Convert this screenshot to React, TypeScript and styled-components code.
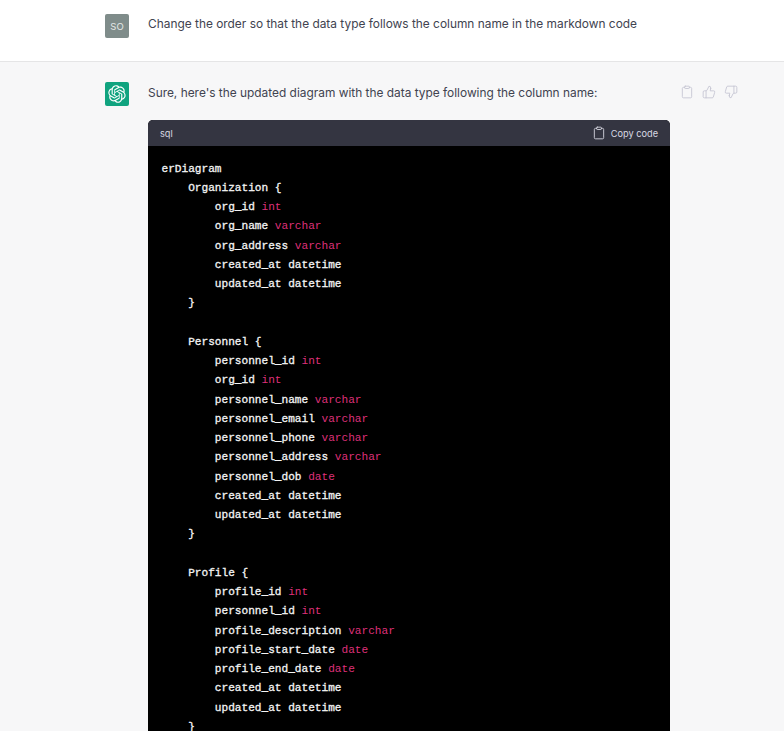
import React from 'react';
import styled, { createGlobalStyle } from 'styled-components';
import { Clipboard, ThumbsDown, ThumbsUp } from 'lucide-react';

const GlobalStyle = createGlobalStyle`
  html, body {
    margin: 0;
    height: 731px;
    overflow: hidden;
    background: #fff;
  }
  #root {
    height: 731px;
    overflow: hidden;
  }
`;

const OPENAI_PATH =
  'M37.5324 16.8707C37.9808 15.5241 38.1363 14.0974 37.9886 12.6859C37.8409 11.2744 37.3934 9.91076 36.676 8.68622C35.6126 6.83404 33.9882 5.3676 32.0373 4.4985C30.0864 3.62941 27.9098 3.40259 25.8215 3.85078C24.8796 2.7893 23.7219 1.94125 22.4257 1.36341C21.1295 0.785575 19.7249 0.491269 18.3058 0.500197C16.1708 0.495044 14.0893 1.16803 12.3614 2.42214C10.6335 3.67624 9.34853 5.44666 8.6917 7.47815C7.30085 7.76286 5.98686 8.3414 4.8377 9.17505C3.68854 10.0087 2.73073 11.0782 2.02839 12.312C0.956464 14.1591 0.498905 16.2988 0.721698 18.4228C0.944492 20.5467 1.83612 22.5449 3.268 24.1293C2.81966 25.4759 2.66413 26.9026 2.81182 28.3141C2.95951 29.7256 3.40701 31.0892 4.12437 32.3138C5.18791 34.1659 6.8123 35.6322 8.76321 36.5013C10.7141 37.3704 12.8907 37.5973 14.9789 37.1492C15.9208 38.2107 17.0786 39.0587 18.3747 39.6366C19.6709 40.2144 21.0755 40.5087 22.4946 40.4998C24.6307 40.5054 26.7133 39.8321 28.4418 38.5772C30.1704 37.3223 31.4556 35.5506 32.1119 33.5179C33.5027 33.2332 34.8167 32.6547 35.9659 31.821C37.115 30.9874 38.0728 29.9178 38.7752 28.684C39.8458 26.8371 40.3023 24.6979 40.0789 22.5748C39.8556 20.4517 38.9639 18.4544 37.5324 16.8707ZM22.4978 37.8849C20.7443 37.8874 19.0459 37.2733 17.6994 36.1501C17.7601 36.117 17.8666 36.0586 17.936 36.0161L25.9004 31.4156C26.1003 31.3019 26.2663 31.137 26.3813 30.9378C26.4964 30.7386 26.5563 30.5124 26.5549 30.2825V19.0542L29.9213 20.998C29.9389 21.0068 29.9541 21.0198 29.9656 21.0359C29.977 21.052 29.9842 21.0707 29.9867 21.0902V30.3889C29.9842 32.375 29.1946 34.2791 27.7909 35.6841C26.3872 37.0892 24.4838 37.8806 22.4978 37.8849ZM6.39227 31.0064C5.51397 29.4888 5.19742 27.7107 5.49804 25.9832C5.55718 26.0187 5.66048 26.0818 5.73461 26.1244L13.699 30.7248C13.8975 30.8408 14.1233 30.902 14.3532 30.902C14.583 30.902 14.8088 30.8408 15.0073 30.7248L24.731 25.1103V28.9979C24.7321 29.0177 24.7283 29.0376 24.7199 29.0556C24.7115 29.0736 24.6988 29.0893 24.6829 29.1012L16.6317 33.7497C14.9096 34.7416 12.8643 35.0097 10.9447 34.4954C9.02506 33.9811 7.38785 32.7263 6.39227 31.0064ZM4.29707 13.6194C5.17156 12.0998 6.55279 10.9364 8.19885 10.3327C8.19885 10.4013 8.19491 10.5228 8.19491 10.6071V19.808C8.19351 20.0378 8.25334 20.2638 8.36823 20.4629C8.48312 20.6619 8.64893 20.8267 8.84863 20.9404L18.5723 26.5542L15.206 28.4979C15.1894 28.5089 15.1703 28.5155 15.1505 28.5173C15.1307 28.5191 15.1107 28.516 15.0924 28.5082L7.04046 23.8557C5.32135 22.8601 4.06716 21.2235 3.55289 19.3046C3.03862 17.3858 3.30624 15.3413 4.29707 13.6194ZM31.955 20.0556L22.2312 14.4411L25.5976 12.4981C25.6142 12.4872 25.6333 12.4805 25.6531 12.4787C25.6729 12.4769 25.6928 12.4801 25.7111 12.4879L33.7631 17.1364C34.9967 17.849 36.0017 18.8982 36.6606 20.1613C37.3194 21.4244 37.6047 22.849 37.4832 24.2684C37.3617 25.6878 36.8382 27.0432 35.9743 28.1759C35.1103 29.3086 33.9415 30.1717 32.6047 30.6641C32.6047 30.5947 32.6047 30.4733 32.6047 30.3889V21.188C32.6066 20.9586 32.5474 20.7328 32.4332 20.5338C32.319 20.3348 32.1541 20.1698 31.955 20.0556ZM35.3055 15.0128C35.2464 14.9765 35.1431 14.9142 35.069 14.8717L27.1045 10.2712C26.906 10.1554 26.6803 10.0943 26.4504 10.0943C26.2206 10.0943 25.9948 10.1554 25.7963 10.2712L16.0726 15.8858V11.9982C16.0715 11.9783 16.0753 11.9585 16.0837 11.9405C16.0921 11.9225 16.1048 11.9068 16.1207 11.8949L24.1719 7.25025C25.4053 6.53903 26.8158 6.19376 28.2383 6.25482C29.6608 6.31589 31.0364 6.78077 32.2044 7.59508C33.3723 8.40939 34.2842 9.53945 34.8334 10.8531C35.3826 12.1667 35.5464 13.6095 35.3055 15.0128ZM14.2424 21.9419L10.8752 19.9981C10.8576 19.9893 10.8423 19.9763 10.8309 19.9602C10.8195 19.9441 10.8122 19.9254 10.8098 19.9058V10.6071C10.8107 9.18295 11.2173 7.78848 11.9819 6.58696C12.7466 5.38544 13.8377 4.42659 15.1275 3.82264C16.4173 3.21869 17.8524 2.99464 19.2649 3.1767C20.6775 3.35876 22.0089 3.93941 23.1034 4.85067C23.0427 4.88379 22.937 4.94215 22.8668 4.98473L14.9024 9.58517C14.7025 9.69878 14.5366 9.86356 14.4215 10.0626C14.3065 10.2616 14.2466 10.4877 14.2479 10.7175L14.2424 21.9419ZM16.071 17.9991L20.4018 15.4978L24.7325 17.9975V22.9985L20.4018 25.4983L16.071 22.9985V17.9991Z';

type CodeLine = { indent: number; text: string; type?: string };

const tables: Array<{ name: string; cols: Array<[string, string]> }> = [
  {
    name: 'Organization',
    cols: [
      ['org_id', 'int'],
      ['org_name', 'varchar'],
      ['org_address', 'varchar'],
      ['created_at', 'datetime'],
      ['updated_at', 'datetime'],
    ],
  },
  {
    name: 'Personnel',
    cols: [
      ['personnel_id', 'int'],
      ['org_id', 'int'],
      ['personnel_name', 'varchar'],
      ['personnel_email', 'varchar'],
      ['personnel_phone', 'varchar'],
      ['personnel_address', 'varchar'],
      ['personnel_dob', 'date'],
      ['created_at', 'datetime'],
      ['updated_at', 'datetime'],
    ],
  },
  {
    name: 'Profile',
    cols: [
      ['profile_id', 'int'],
      ['personnel_id', 'int'],
      ['profile_description', 'varchar'],
      ['profile_start_date', 'date'],
      ['profile_end_date', 'date'],
      ['created_at', 'datetime'],
      ['updated_at', 'datetime'],
    ],
  },
];

const codeLines: CodeLine[] = [{ indent: 0, text: 'erDiagram' }];
tables.forEach((table, i) => {
  if (i > 0) codeLines.push({ indent: 0, text: '' });
  codeLines.push({ indent: 4, text: `${table.name} {` });
  table.cols.forEach(([col, type]) => codeLines.push({ indent: 8, text: col, type }));
  codeLines.push({ indent: 4, text: '}' });
});

const App = () => {
  return (
    <Page>
      <GlobalStyle />
      <UserRow>
        <UserAvatar>SO</UserAvatar>
        <Message>Change the order so that the data type follows the column name in the markdown code</Message>
      </UserRow>
      <AssistantRow>
        <BotAvatar>
          <svg width="18" height="18" viewBox="0 0 41 41" fill="none">
            <path d={OPENAI_PATH} fill="#fff" />
          </svg>
        </BotAvatar>
        <Content>
          <Message>Sure, here's the updated diagram with the data type following the column name:</Message>
          <CodeBlock>
            <CodeHeader>
              <span>sql</span>
              <CopyButton>
                <Clipboard size={14} strokeWidth={1.5} />
                Copy code
              </CopyButton>
            </CodeHeader>
            <CodeBody>
              {codeLines.map((line, i) => (
                <Line key={i}>
                  {' '.repeat(line.indent)}
                  {line.text}
                  {line.type && (
                    <>
                      {' '}
                      {line.type === 'datetime' ? line.type : <TypeName>{line.type}</TypeName>}
                    </>
                  )}
                </Line>
              ))}
            </CodeBody>
          </CodeBlock>
        </Content>
        <Actions>
          <Clipboard size={14} strokeWidth={1.5} />
          <ThumbsUp size={14} strokeWidth={1.5} />
          <ThumbsDown size={14} strokeWidth={1.5} />
        </Actions>
      </AssistantRow>
    </Page>
  );
};

const Page = styled.div`
  font-family: Inter, 'Noto Sans', sans-serif;
  color: #374151;
  height: 731px;
  overflow: hidden;
`;

const UserRow = styled.div`
  display: flex;
  gap: 19px;
  height: 62px;
  padding: 14px 0 0 105px;
  box-sizing: border-box;
  background: #fff;
  border-bottom: 1px solid #e5e5e6;
`;

const AssistantRow = styled.div`
  display: flex;
  gap: 19px;
  padding: 20px 0 0 105px;
  background: #f7f7f8;
  min-height: 669px;
  box-sizing: border-box;
`;

const UserAvatar = styled.div`
  width: 24px;
  height: 24px;
  flex: none;
  display: flex;
  align-items: center;
  justify-content: center;
  border-radius: 2px;
  background: #7f8c8a;
  color: #e4e8e7;
  font-size: 9.5px;
`;

const BotAvatar = styled.div`
  width: 24px;
  height: 24px;
  flex: none;
  display: flex;
  align-items: center;
  justify-content: center;
  border-radius: 2px;
  background: #10a37f;
`;

const Content = styled.div`
  width: 522px;
  flex: none;
  display: flex;
  flex-direction: column;
  padding-top: 1px;
`;

const Message = styled.div`
  font-size: 11.9px;
  line-height: 20px;
  color: #414350;
  white-space: nowrap;
`;

const CodeBlock = styled.div`
  margin-top: 17px;
  border-radius: 5px 5px 0 0;
  overflow: hidden;
  background: #000;
`;

const CodeHeader = styled.div`
  height: 26px;
  padding: 0 12px;
  display: flex;
  align-items: center;
  justify-content: space-between;
  background: #343541;
  color: #d9d9e3;
  font-size: 9.2px;
`;

const CopyButton = styled.div`
  display: flex;
  align-items: center;
  gap: 5px;
`;

const CodeBody = styled.div`
  padding: 13.5px 13.5px;
  font-family: 'Liberation Mono', monospace;
  font-size: 11.12px;
  line-height: 19.25px;
  color: #f4f4f4;
  -webkit-text-stroke: 0.3px #f4f4f4;
  white-space: pre;
`;

const Line = styled.div`
  min-height: 19.25px;
`;

const TypeName = styled.span`
  color: #df3079;
  -webkit-text-stroke: 0;
`;

const Actions = styled.div`
  display: flex;
  gap: 8px;
  margin-left: -9px;
  height: 20px;
  align-items: center;
  color: #c5c5d2;
`;

export default App;
